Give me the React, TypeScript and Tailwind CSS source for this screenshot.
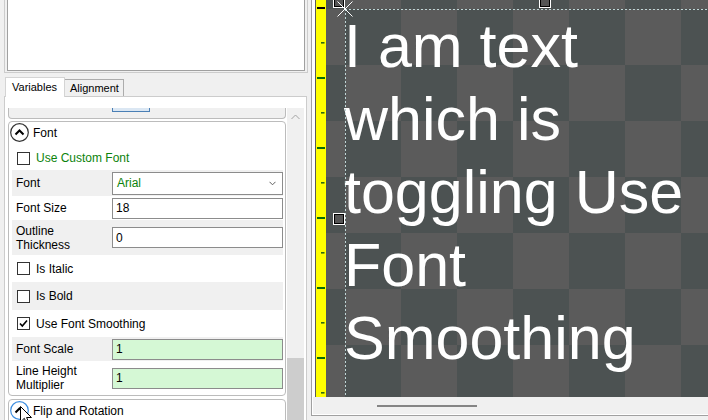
import React from 'react';
import clsx from 'clsx';

// ruler ticks: long every 70px, short halfway between
const longTicks = [8, 78, 148, 218, 288, 358];
const shortTicks = [43, 113, 183, 253, 323, 393];

const canvasLines = ['I am text', 'which is', 'toggling Use', 'Font', 'Smoothing'];

function Checkbox({ checked }: { checked?: boolean }) {
  return (
    <span className="flex h-[13px] w-[13px] shrink-0 items-center justify-center border border-[#333333] bg-white">
      {checked && (
        <svg width="11" height="11" viewBox="0 0 11 11">
          <path d="M2 5.5 L4.3 8 L9 2.5" fill="none" stroke="#000" strokeWidth="1.6" />
        </svg>
      )}
    </span>
  );
}

function CheckRow({ label, checked, gray, green, h }: { label: string; checked?: boolean; gray?: boolean; green?: boolean; h: string }) {
  return (
    <div className={clsx('flex items-center gap-[6px] pl-[5px]', h, gray && 'bg-[#f0f0f0]')}>
      <Checkbox checked={checked} />
      <span className={green ? 'text-[#0b830b]' : 'text-black'}>{label}</span>
    </div>
  );
}

function FieldRow({ label, value, gray, green, h }: { label: string[]; value: string; gray?: boolean; green?: boolean; h: string }) {
  return (
    <div className={clsx('flex items-center', h, gray && 'bg-[#f0f0f0]')}>
      <div className="w-[100px] pl-[4px] leading-[14px]">
        {label.map(l => (
          <div key={l}>{l}</div>
        ))}
      </div>
      <div
        className={clsx(
          'flex h-[21px] w-[171px] items-center border border-[#8c8c8c] pl-[3px]',
          green ? 'bg-[#d5f8d5]' : 'bg-white'
        )}
      >
        {value}
      </div>
    </div>
  );
}

function CircleIcon({ hover }: { hover?: boolean }) {
  return (
    <svg width="19" height="19" viewBox="0 0 19 19" className="shrink-0">
      <circle cx="9.5" cy="9.5" r="8.8" fill="#fff" stroke={hover ? '#3d8ee0' : '#333'} strokeWidth="1.2" />
      <path d="M5.5 11.5 L9.5 7.5 L13.5 11.5" fill="none" stroke="#000" strokeWidth="2" />
    </svg>
  );
}

export default function App() {
  return (
    <div className="flex h-[420px] w-[708px] overflow-hidden bg-[#f0f0f0] font-['Liberation_Sans',Arial,sans-serif] text-[12px] text-black">
      {/* Left properties pane */}
      <div className="w-[311px] shrink-0">
        <div className="ml-[4px] h-[73px] w-[304px] border border-t-0 border-[#cccccc] px-[2px] pb-[1px]">
          <div className="h-full border border-t-0 border-[#a0a0a0] bg-white" />
        </div>

        {/* Tabs */}
        <div className="ml-[5px] mt-[4px] flex h-[19px] items-end">
          <div className="relative z-10 -mb-px flex h-[20px] w-[60px] items-center border border-b-0 border-[#d4d4d4] bg-white pl-[6px] text-[11px]">
            Variables
          </div>
          <div className="flex h-[17px] w-[59px] items-center border border-b-0 border-l-0 border-[#acacac] bg-[#f0f0f0] pl-[5px] text-[11px]">
            Alignment
          </div>
        </div>

        <div className="ml-[4px] h-[340px] w-[303px] border border-[#cccccc] bg-white pl-[3px] pt-[11px]">
          <div className="flex h-full">
            <div className="w-[278px] shrink-0">
              {/* previous group, scrolled mostly out of view */}
              <div className="h-[11px] rounded-b-[4px] border border-t-0 border-[#bcbcbc] bg-[#f0f0f0]">
                <div className="ml-[103px] h-[4px] w-[38px] border border-t-0 border-[#4a7fb5] bg-[#dbe7f3]" />
              </div>

              {/* Font group */}
              <div className="mt-[2px] h-[275px] rounded-[4px] border border-[#bcbcbc] bg-white">
                <div className="flex h-[24px] items-start gap-[4px] pl-[1px] pt-[1px]">
                  <CircleIcon />
                  <span className="leading-[20px]">Font</span>
                </div>
                <div className="ml-[3px] w-[271px]">
                  <CheckRow label="Use Custom Font" green h="h-[24px]" />
                  <div className="flex h-[26px] items-center bg-[#f0f0f0]">
                    <div className="w-[100px] pl-[4px]">Font</div>
                    <div className="flex h-[23px] w-[171px] items-center justify-between border border-[#8c8c8c] bg-white pl-[4px] pr-[6px] text-[#0b830b]">
                      Arial
                      <svg width="7" height="5" viewBox="0 0 7 5">
                        <path d="M0.5 0.8 L3.5 3.8 L6.5 0.8" fill="none" stroke="#606060" strokeWidth="1" />
                      </svg>
                    </div>
                  </div>
                  <FieldRow label={['Font Size']} value="18" h="h-[24px]" />
                  <FieldRow label={['Outline', 'Thickness']} value="0" gray h="h-[35px]" />
                  <CheckRow label="Is Italic" h="h-[27px]" />
                  <CheckRow label="Is Bold" gray h="h-[28px]" />
                  <CheckRow label="Use Font Smoothing" checked h="h-[27px]" />
                  <FieldRow label={['Font Scale']} value="1" gray green h="h-[24px]" />
                  <FieldRow label={['Line Height', 'Multiplier']} value="1" green h="h-[34px]" />
                </div>
              </div>

              {/* Flip and Rotation group */}
              <div className="mt-[3px] h-[40px] rounded-t-[4px] border border-[#bcbcbc] bg-white">
                <div className="relative flex items-start gap-[4px] pl-[1px] pt-[1px]">
                  <CircleIcon hover />
                  <span className="leading-[21px]">Flip and Rotation</span>
                  {/* mouse pointer */}
                  <svg width="13" height="20" viewBox="0 0 13 20" className="absolute left-[11px] top-[6px]">
                    <path d="M0.5 0.5 L0.5 16 L4.3 12.3 L7 18.5 L9.2 17.5 L6.6 11.5 L11.5 11.5 Z" fill="#fff" stroke="#000" strokeWidth="1" />
                  </svg>
                </div>
              </div>
            </div>

            {/* vertical scrollbar */}
            <div className="ml-[1px] flex w-[17px] shrink-0 flex-col bg-[#f0f0f0]">
              <div className="flex h-[17px] items-center justify-center">
                <svg width="9" height="6" viewBox="0 0 9 6">
                  <path d="M0.5 5 L4.5 1 L8.5 5" fill="none" stroke="#a3a3a3" strokeWidth="1" />
                </svg>
              </div>
              <div className="h-[233px]" />
              <div className="flex-1 bg-[#cdcdcd]" />
            </div>
          </div>
        </div>
      </div>

      {/* Right preview pane */}
      <div className="h-[416px] w-[397px] shrink-0 border-b border-l border-[#a0a0a0] bg-white pb-[1px] pl-[1px]">
        <div className="flex h-[397px] pl-[2px]">
          <div className="h-full w-[11px] shrink-0 border-l border-[#5a5a5a] bg-[#ffff00]">
            <svg width="10" height="397" viewBox="0 0 10 397">
              {longTicks.map((y, i) => (
                <rect key={y} x="1" y={y - 1} width="8" height="2" fill={i === 0 ? '#000' : '#066a06'} />
              ))}
              {shortTicks.map(y => (
                <rect key={y} x="5" y={y - 1} width="3.5" height="1.6" fill="#2f6a10" />
              ))}
            </svg>
          </div>

          <div className="relative h-full flex-1 overflow-hidden bg-[image:repeating-conic-gradient(#5b5b5b_0_25%,#4c5252_0_50%)] bg-[length:112px_112px] bg-[position:19px_9px]">
            <div className="absolute left-[18px] top-[10px] whitespace-pre text-[61px] leading-[73px] text-white">
              {canvasLines.map(l => (
                <div key={l}>{l}</div>
              ))}
            </div>

            <svg width="382" height="397" viewBox="0 0 382 397" className="absolute left-0 top-0">
              <line x1="19" y1="9.5" x2="382" y2="9.5" stroke="#bfd6d6" strokeWidth="1" strokeDasharray="2 2" />
              <line x1="19.5" y1="9" x2="19.5" y2="397" stroke="#bfd6d6" strokeWidth="1" strokeDasharray="2 2" />

              {/* resize handles */}
              <rect x="7.5" y="-3.5" width="11" height="11" fill="#555" stroke="#fff" strokeWidth="1" />
              <rect x="8.5" y="-2.5" width="9" height="9" fill="#555" stroke="#000" strokeWidth="1" />
              <rect x="213.5" y="-3.5" width="11" height="11" fill="#555" stroke="#fff" strokeWidth="1" />
              <rect x="214.5" y="-2.5" width="9" height="9" fill="#555" stroke="#000" strokeWidth="1" />
              <rect x="7.5" y="213.5" width="11" height="11" fill="#555" stroke="#fff" strokeWidth="1" />
              <rect x="8.5" y="214.5" width="9" height="9" fill="#555" stroke="#000" strokeWidth="1" />

              {/* origin cross */}
              <line x1="11.5" y1="1.5" x2="26.5" y2="16.5" stroke="#fff" strokeWidth="1" />
              <line x1="26.5" y1="1.5" x2="11.5" y2="16.5" stroke="#fff" strokeWidth="1" />
            </svg>
          </div>
        </div>

        {/* horizontal scrollbar */}
        <div className="flex h-[17px] items-center bg-[#f0f0f0] pl-[64px]">
          <div className="h-[2px] w-[100px] bg-[#858585]" />
        </div>
      </div>
    </div>
  );
}
